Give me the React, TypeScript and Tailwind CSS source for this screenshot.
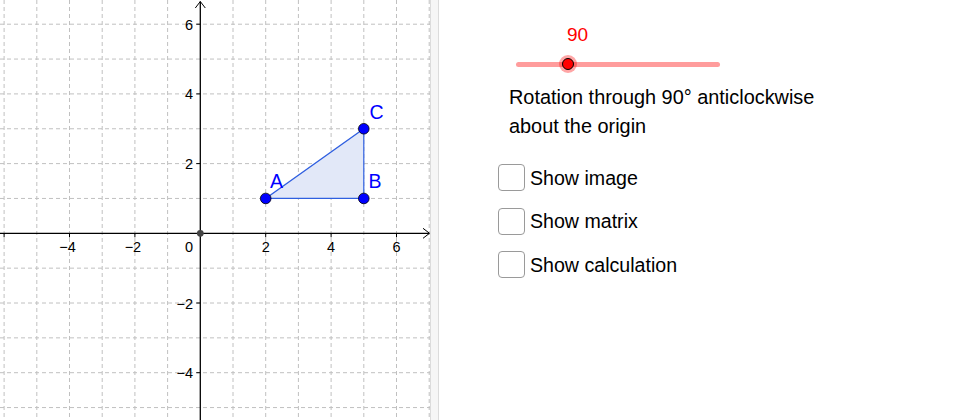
import React from 'react';

const OX = 200.3;
const OY = 233.3;
const SX = 32.7;
const SY = 34.85;

const px = (x: number) => OX + x * SX;
const py = (y: number) => OY - y * SY;

const FONT = '"Liberation Sans", Arial, sans-serif';

function Graphics() {
  const vLines = [];
  for (let k = -6; k <= 7; k++) if (k !== 0) vLines.push(px(k));
  const hLines = [];
  for (let k = -5; k <= 6; k++) if (k !== 0) hLines.push(py(k));

  const xLabels = [-4, -2, 2, 4, 6];
  const yLabels = [6, 4, 2, -2, -4];

  const A = [px(2), py(1)];
  const B = [px(5), py(1)];
  const C = [px(5), py(3)];

  return (
    <svg width={430} height={420} className="block shrink-0" style={{ fontFamily: FONT }}>
      <rect width={430} height={420} fill="#ffffff" />
      {/* grid */}
      {vLines.map(x => (
        <line key={'v' + x} x1={x} y1={0} x2={x} y2={420} stroke="#c0c0c0" strokeWidth={1} strokeDasharray="4 3" />
      ))}
      {hLines.map(y => (
        <line key={'h' + y} x1={0} y1={y} x2={430} y2={y} stroke="#c0c0c0" strokeWidth={1} strokeDasharray="4 3" />
      ))}

      {/* axes */}
      <line x1={0} y1={OY} x2={429} y2={OY} stroke="#000" strokeWidth={1.3} />
      <polyline points={`423,${OY - 5} 429.5,${OY} 423,${OY + 5}`} fill="none" stroke="#000" strokeWidth={1} />
      <line x1={OX} y1={420} x2={OX} y2={1.5} stroke="#000" strokeWidth={1.3} />
      <polyline points={`${OX - 5},8 ${OX},1.5 ${OX + 5},8`} fill="none" stroke="#000" strokeWidth={1} />

      {/* ticks */}
      {[-6, -4, -2, 2, 4, 6].map(k => (
        <line key={'tx' + k} x1={px(k)} y1={OY} x2={px(k)} y2={OY + 4} stroke="#000" strokeWidth={1} />
      ))}
      {[-4, -2, 2, 4, 6].map(k => (
        <line key={'ty' + k} x1={OX - 4} y1={py(k)} x2={OX} y2={py(k)} stroke="#000" strokeWidth={1} />
      ))}

      {/* tick labels */}
      {xLabels.map(k => (
        <text key={'lx' + k} x={px(k) + (k < 0 ? -2 : 0)} y={251.7} fontSize={14.5} textAnchor="middle" fill="#000">
          {k < 0 ? '\u2212' + Math.abs(k) : k}
        </text>
      ))}
      <text x={189} y={251.7} fontSize={14.5} textAnchor="middle" fill="#000">0</text>
      {yLabels.map(k => (
        <text key={'ly' + k} x={193} y={py(k) + 5.5} fontSize={14.5} textAnchor="end" fill="#000">
          {k < 0 ? '\u2212' + Math.abs(k) : k}
        </text>
      ))}

      {/* triangle */}
      <polygon
        points={`${A[0]},${A[1]} ${B[0]},${B[1]} ${C[0]},${C[1]}`}
        fill="#e2e8f8"
        stroke="#2f5fe0"
        strokeWidth={1.2}
      />

      {/* origin */}
      <circle cx={OX} cy={OY} r={3.4} fill="#444" />

      {/* points */}
      {[A, B, C].map((p, i) => (
        <circle key={'p' + i} cx={p[0]} cy={p[1]} r={5.3} fill="#0000ff" stroke="#000" strokeWidth={0.8} />
      ))}
      <text x={270} y={187.7} fontSize={19.5} fill="#0000ff">A</text>
      <text x={368.5} y={187.5} fontSize={19.5} fill="#0000ff">B</text>
      <text x={369.5} y={119} fontSize={19.5} fill="#0000ff">C</text>
    </svg>
  );
}

function Checkbox({ label }: { label: string }) {
  return (
    <div className="flex items-center h-[26px] gap-[5px]">
      <div className="w-[27px] h-[27px] rounded-[4px] border-[1.5px] border-[#9a9a9a] bg-white" />
      <span className="text-[19.6px] leading-[26px] text-black">{label}</span>
    </div>
  );
}

export default function App() {
  return (
    <div
      className="flex w-[980px] h-[420px] bg-white overflow-hidden"
      style={{ fontFamily: FONT }}
    >
      <Graphics />
      <div className="w-[9px] h-full shrink-0 bg-[#f6f6f6] border-l border-r border-[#dcdcdc]" />
      <div className="flex-1 flex flex-col pt-[24px]">
        <div className="ml-[128px] text-[19px] leading-[22px] text-[#ff0000]">90</div>
        <div className="relative ml-[77px] mt-[8px] w-[204px] h-[20px]">
          <div className="absolute left-0 right-0 top-[7.5px] h-[5px] rounded-full bg-[#ff9c9c]" />
          <div className="absolute left-[43px] top-[1px] w-[18px] h-[18px] rounded-full bg-[#ff0000]/35" />
          <div className="absolute left-[46px] top-[4px] w-[12px] h-[12px] rounded-full bg-[#ff0000] border border-black" />
        </div>
        <div className="ml-[70px] mt-[9px] text-[19.9px] leading-[29px] text-black">
          <div>Rotation through 90° anticlockwise</div>
          <div>about the origin</div>
        </div>
        <div className="ml-[59px] mt-[23.5px] flex flex-col gap-[17.5px]">
          <Checkbox label="Show image" />
          <Checkbox label="Show matrix" />
          <Checkbox label="Show calculation" />
        </div>
      </div>
    </div>
  );
}
